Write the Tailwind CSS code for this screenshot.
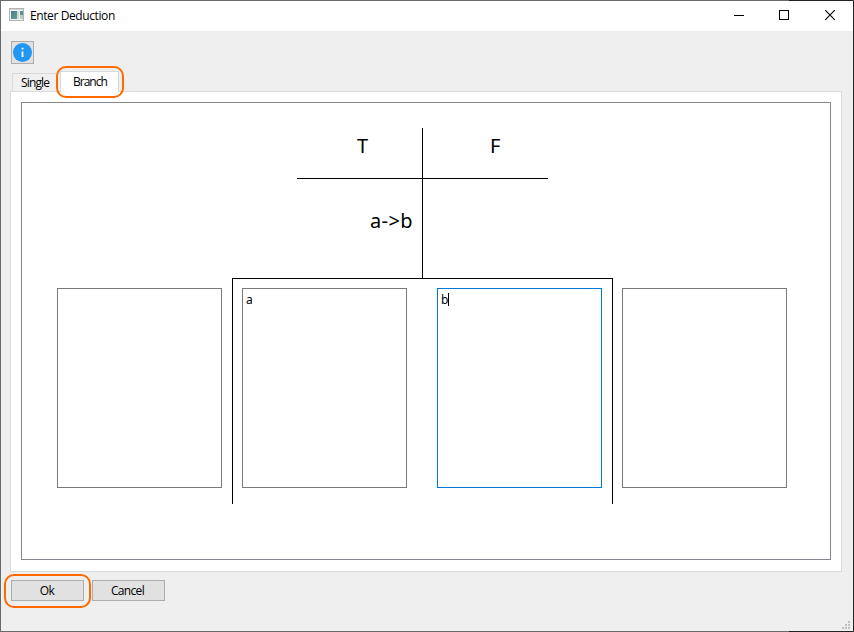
<!DOCTYPE html>
<html lang="en">
<head>
<meta charset="utf-8">
<title>Enter Deduction</title>
<script src="https://cdn.jsdelivr.net/npm/@tailwindcss/browser@4"></script>
</head>
<body class="overflow-hidden">
<div class="relative flex h-[632px] w-[854px] flex-col border border-t-[#6a6a6a] border-r-[#222222] border-b-[#6a686b] border-l-[#6b696c] bg-[#efefef] font-['Open_Sans','Noto_Sans',sans-serif] text-[12px] text-black">
  <div class="absolute -top-px right-0 h-px w-16 bg-[#222222]"></div>
  <div class="absolute -bottom-px right-0 h-px w-16 bg-[#222222]"></div>

  <header class="flex h-[30px] shrink-0 items-center bg-white pl-2">
    <svg class="mb-[3px] h-[13px] w-[15px]" viewBox="0 0 15 13" shape-rendering="crispEdges">
      <defs>
        <linearGradient id="g" x1="0" y1="0" x2="1" y2="1"><stop offset="0" stop-color="#4878a0"/><stop offset="1" stop-color="#5fa67c"/></linearGradient>
      </defs>
      <rect x=".5" y=".5" width="14" height="12" fill="#f2f2f2" stroke="#b0b3b5"/>
      <rect x="1" y="1" width="13" height="1" fill="#d5d8da"/>
      <rect x="2" y="3" width="6" height="8" fill="url(#g)"/>
      <rect x="8" y="3" width="2" height="8" fill="#d3d7d9"/>
      <rect x="11" y="3" width="3" height="4" fill="#5a909c"/>
      <rect x="11" y="7" width="3" height="4" fill="#b4d0bd"/>
    </svg>
    <h1 class="ml-[6px] grow text-[12px] leading-4 tracking-[-0.4px]">Enter Deduction</h1>
    <svg class="h-[30px] w-[138px]" viewBox="0 0 138 30" fill="none" stroke="#000">
      <path d="M19 14.500h10" shape-rendering="crispEdges"/>
      <path d="M64.500 9.500h9v9h-9z" shape-rendering="crispEdges"/>
      <path d="M110.200 9.200l9.600 9.600M119.800 9.200l-9.600 9.600" stroke-width="1.100"/>
    </svg>
  </header>

  <div class="mt-[10px] ml-[10px] flex size-[23px] shrink-0 items-center justify-center border border-[#adadad] bg-[#e1e1e1]">
    <svg class="size-[19px]" viewBox="0 0 19 19"><circle cx="9.500" cy="9.500" r="9.500" fill="#2196f3"/><path d="M8.600 4.800h1.800v1.800H8.600zM8.600 8.500h1.800v5.600H8.600z" fill="#fff"/></svg>
  </div>

  <nav class="relative z-10 mt-[7px] ml-[11px] flex h-[21px] shrink-0 items-end">
    <div class="mb-px h-[18px] w-[48px] border border-r-0 border-b-0 border-[#d9d9d9] bg-[#f0f0f0] pl-2 leading-[18px] tracking-[-0.85px]">Single</div>
    <div class="h-[21px] w-[59px] border border-b-0 border-[#d9d9d9] bg-white pl-3 leading-[20px] tracking-[-1px]">Branch</div>
    <div class="absolute -top-[5px] left-[44px] h-[32px] w-[68px] rounded-[10px] border-2 border-[#ff6a00]"></div>
  </nav>

  <main class="-mt-px ml-[9px] h-[481px] w-[832px] shrink-0 border border-[#dadada] bg-white p-[10px]">
    <div class="relative h-[458px] w-[810px] border border-[#828790] pt-[185px] pl-[35px]">
      <svg class="absolute top-0 left-0 h-[456px] w-[808px]" viewBox="22 103 808 456" fill="none" stroke="#000" shape-rendering="crispEdges">
        <path d="M422.500 128V278M297 178.500H548M232.500 504V278.500H612.500V504"/>
      </svg>
      <span class="absolute top-[30px] left-[335px] font-['Noto_Sans'] text-[20px] leading-[26px]">T</span>
      <span class="absolute top-[30px] left-[468px] font-['Noto_Sans'] text-[20px] leading-[26px]">F</span>
      <span class="absolute top-[105px] left-[348px] font-['Noto_Sans'] text-[20px] leading-[26px] tracking-[0.4px] whitespace-nowrap">a-&gt;b</span>
      <div class="relative flex font-['Noto_Sans'] leading-[15px]">
        <div class="h-[200px] w-[165px] border border-[#7a7a7a] bg-white"></div>
        <div class="ml-5 h-[200px] w-[165px] border border-[#7a7a7a] bg-white pt-[3px] pl-[3px]">a</div>
        <div class="ml-[30px] flex h-[200px] w-[165px] border border-[#0078d7] bg-white pt-[3px] pl-[3px]">b<i class="mt-px h-[13px] w-px bg-black"></i></div>
        <div class="ml-5 h-[200px] w-[165px] border border-[#7a7a7a] bg-white"></div>
      </div>
    </div>
  </main>

  <footer class="relative mt-2 ml-[10px] flex gap-2 tracking-[-0.65px]">
    <button class="h-[21px] w-[73px] border border-[#adadad] bg-[#e1e1e1] pr-px leading-[20px]">Ok</button>
    <button class="h-[21px] w-[73px] border border-[#adadad] bg-[#e1e1e1] pr-[2px] leading-[20px]">Cancel</button>
    <div class="absolute -top-[6px] -left-[7px] h-[34px] w-[87px] rounded-[10px] border-2 border-[#ff6a00]"></div>
  </footer>

  <svg class="absolute right-[3px] bottom-[2px] size-2" viewBox="0 0 8 8" fill="#bfbfbf" shape-rendering="crispEdges"><path d="M6 0h2v2H6zM3 3h2v2H3zM6 3h2v2H6zM0 6h2v2H0zM3 6h2v2H3zM6 6h2v2H6z"/></svg>
</div>
</body>
</html>
